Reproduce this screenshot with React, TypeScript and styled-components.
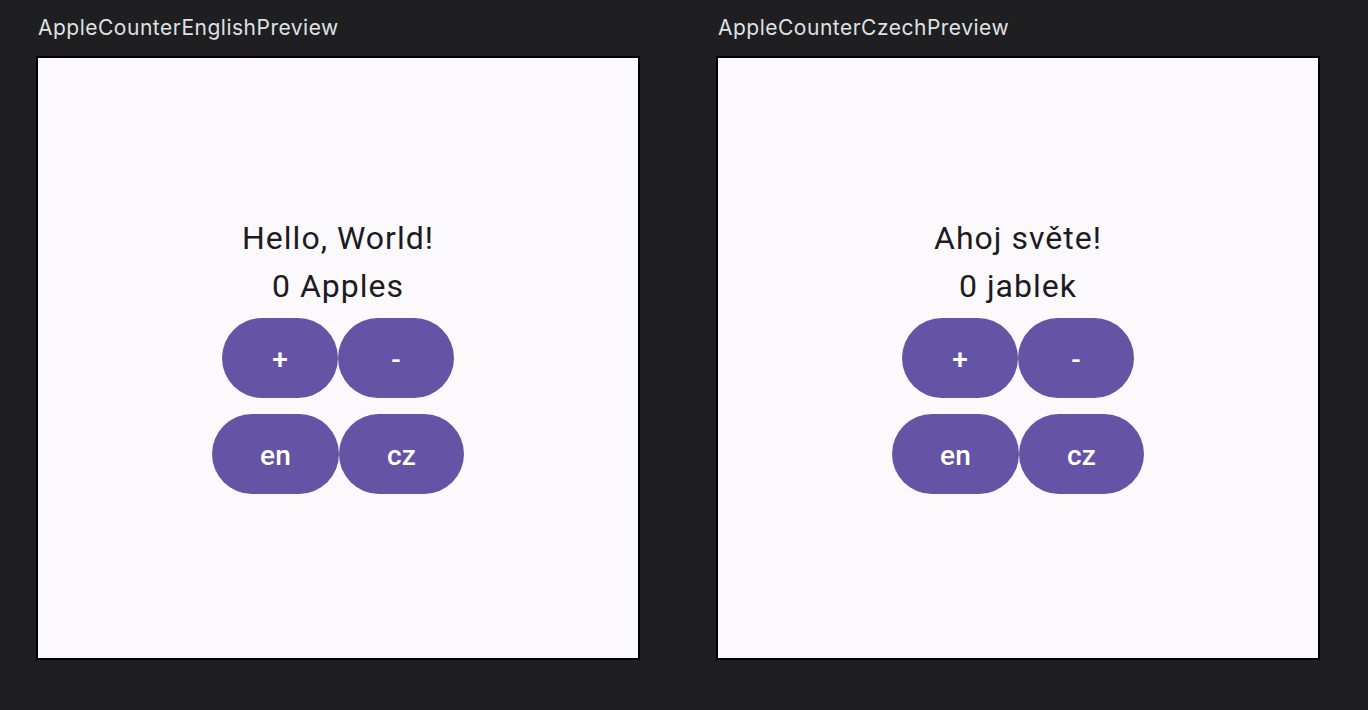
import * as React from 'react';
import styled, { createGlobalStyle } from 'styled-components';

const GlobalStyle = createGlobalStyle`
  html, body {
    margin: 0;
    padding: 0;
    background: #1f1f22;
  }
`;

const Page = styled.div`
  display: flex;
  gap: 76px;
  padding: 16px 36px 0;
  height: 710px;
  box-sizing: border-box;
`;

const Preview = styled.section`
  display: flex;
  flex-direction: column;
  gap: 16px;
`;

const Label = styled.div`
  padding-left: 2px;
  font-family: Inter, 'Noto Sans', sans-serif;
  font-size: 21px;
  line-height: 24px;
  letter-spacing: 0.5px;
  color: #dfe1e5;
`;

const Frame = styled.div`
  width: 600px;
  height: 600px;
  border: 2px solid #000;
  background: #fcf9fd;
  display: flex;
  flex-direction: column;
  align-items: center;
  justify-content: center;
  font-family: Roboto, 'Liberation Sans', sans-serif;
`;

const Line = styled.div`
  font-size: 32px;
  line-height: 48px;
  letter-spacing: 1px;
  color: #1c1b1f;
`;

const ButtonRow = styled.div`
  display: flex;
`;

const TouchTarget = styled.div`
  padding: 8px 0;
`;

const PillButton = styled.button`
  min-width: 116px;
  height: 80px;
  padding: 3px 48px 0;
  border: none;
  border-radius: 40px;
  background: #6553a5;
  color: #fff;
  font-family: Roboto, 'Liberation Sans', sans-serif;
  font-size: 28px;
  font-weight: 500;
  letter-spacing: 0.2px;
  line-height: 40px;
  cursor: pointer;
`;

type Strings = {
  title: string;
  greeting: string;
  apples: (n: number) => string;
};

const en: Strings = {
  title: 'AppleCounterEnglishPreview',
  greeting: 'Hello, World!',
  apples: n => `${n} Apples`,
};

const cz: Strings = {
  title: 'AppleCounterCzechPreview',
  greeting: 'Ahoj světe!',
  apples: n => `${n} jablek`,
};

function Btn({ children, onClick }: { children: React.ReactNode; onClick?: () => void }) {
  return (
    <TouchTarget>
      <PillButton onClick={onClick}>{children}</PillButton>
    </TouchTarget>
  );
}

function AppleCounter({ strings }: { strings: Strings }) {
  const [count, setCount] = React.useState(0);
  return (
    <Preview>
      <Label>{strings.title}</Label>
      <Frame>
        <Line>{strings.greeting}</Line>
        <Line>{strings.apples(count)}</Line>
        <ButtonRow>
          <Btn onClick={() => setCount(c => c + 1)}>+</Btn>
          <Btn onClick={() => setCount(c => Math.max(0, c - 1))}>-</Btn>
        </ButtonRow>
        <ButtonRow>
          <Btn>en</Btn>
          <Btn>cz</Btn>
        </ButtonRow>
      </Frame>
    </Preview>
  );
}

export default function App() {
  return (
    <>
      <GlobalStyle />
      <Page>
        <AppleCounter strings={en} />
        <AppleCounter strings={cz} />
      </Page>
    </>
  );
}
